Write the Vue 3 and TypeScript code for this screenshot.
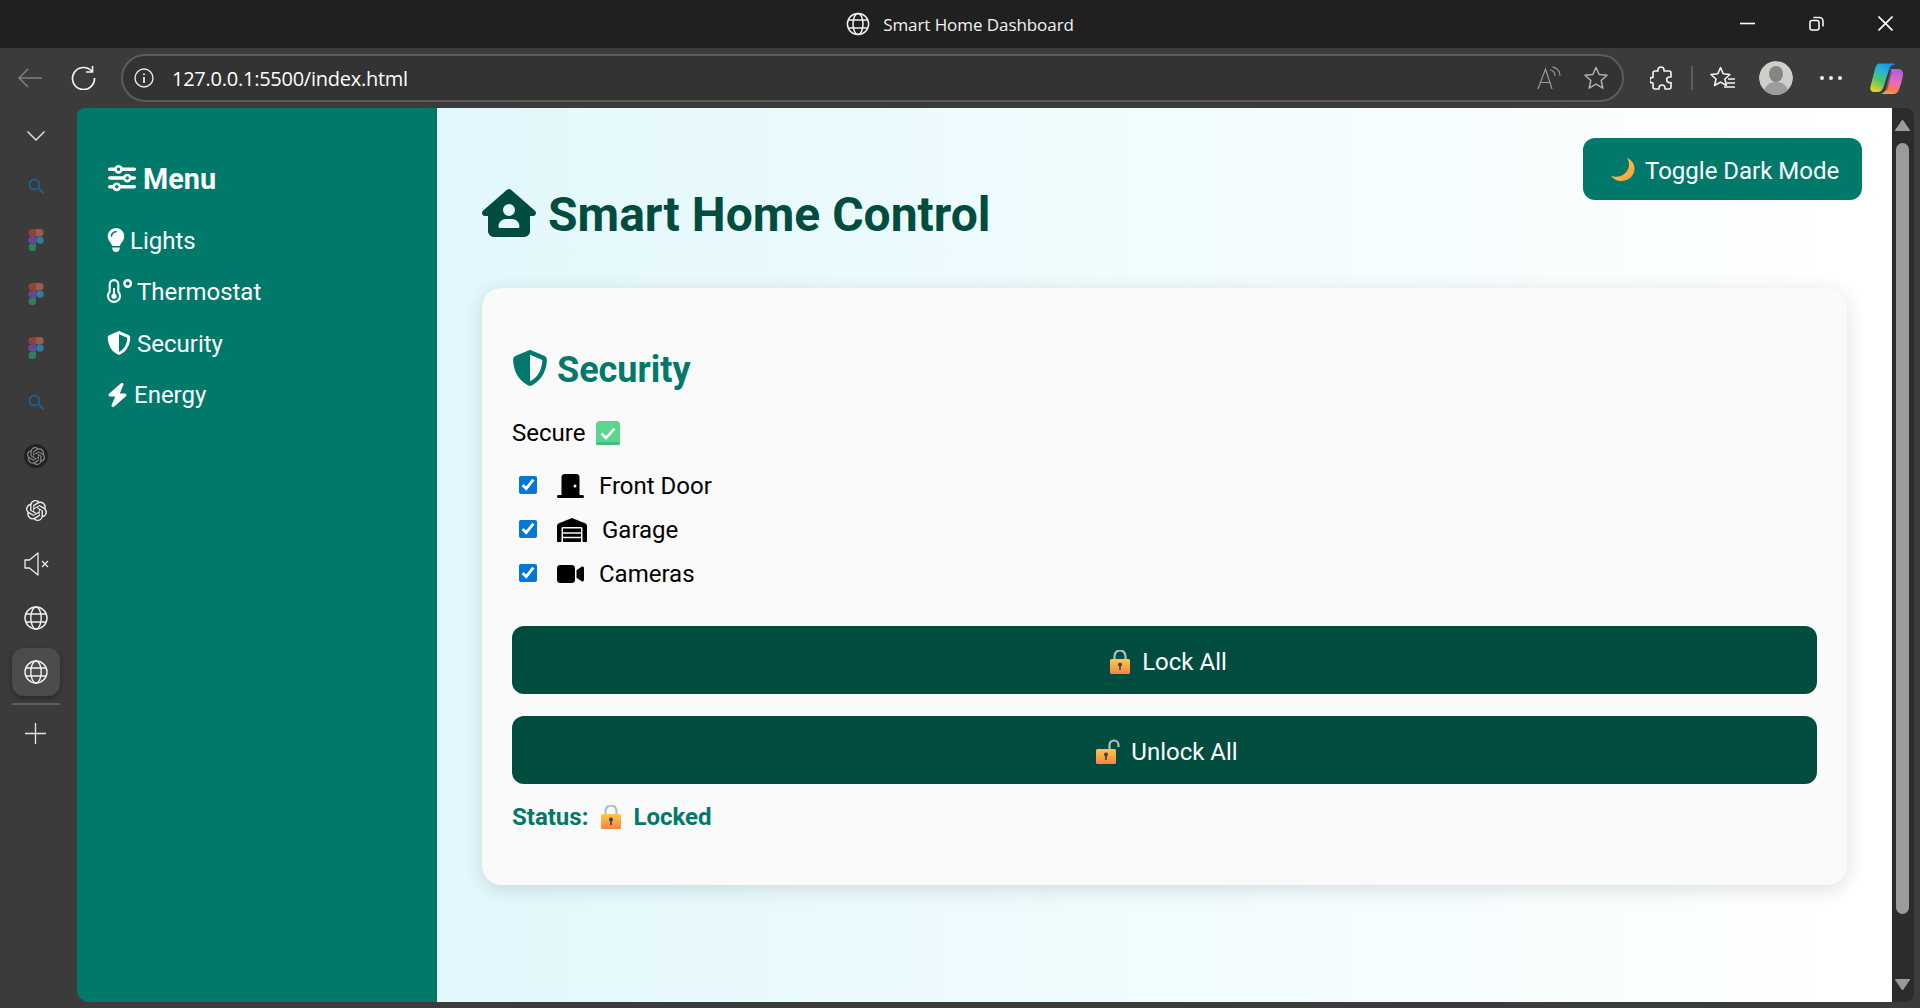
<script setup lang="ts">
const sliders = "M0 416c0 17.7 14.3 32 32 32l54.7 0c12.3 28.3 40.5 48 73.3 48s61-19.7 73.3-48L480 448c17.7 0 32-14.3 32-32s-14.3-32-32-32l-246.7 0c-12.3-28.3-40.5-48-73.3-48s-61 19.7-73.3 48L32 384c-17.7 0-32 14.3-32 32zm128 0a32 32 0 1 1 64 0 32 32 0 1 1 -64 0zM320 256a32 32 0 1 1 64 0 32 32 0 1 1 -64 0zm32-80c-32.8 0-61 19.7-73.3 48L32 224c-17.7 0-32 14.3-32 32s14.3 32 32 32l246.7 0c12.3 28.3 40.5 48 73.3 48s61-19.7 73.3-48l54.7 0c17.7 0 32-14.3 32-32s-14.3-32-32-32l-54.7 0c-12.3-28.3-40.5-48-73.3-48zM192 128a32 32 0 1 1 0-64 32 32 0 1 1 0 64zm73.3-64C253 35.7 224.8 16 192 16s-61 19.7-73.3 48L32 64C14.3 64 0 78.3 0 96s14.3 32 32 32l86.7 0c12.3 28.3 40.5 48 73.3 48s61-19.7 73.3-48L480 128c17.7 0 32-14.3 32-32s-14.3-32-32-32L265.3 64z";
const bulb = "M272 384c9.6-31.9 29.5-59.1 49.2-86.2l0 0c5.2-7.1 10.4-14.2 15.4-21.4c19.8-28.5 31.4-63 31.4-100.3C368 78.8 289.2 0 192 0S16 78.8 16 176c0 37.3 11.6 71.9 31.4 100.3c5 7.2 10.2 14.3 15.4 21.4l0 0c19.8 27.1 39.7 54.4 49.2 86.2H272zM192 512c44.2 0 80-35.8 80-80V416H112v16c0 44.2 35.8 80 80 80zM112 176c0 8.8-7.2 16-16 16s-16-7.2-16-16c0-61.9 50.1-112 112-112c8.8 0 16 7.2 16 16s-7.2 16-16 16c-44.2 0-80 35.8-80 80z";
const shield = "M256 0c4.6 0 9.2 1 13.4 2.9L457.7 82.8c22 9.3 38.4 31 38.3 57.2c-.5 99.2-41.3 280.7-213.6 363.2c-16.7 8-36.1 8-52.8 0C57.3 420.7 16.5 239.2 16 140c-.1-26.2 16.3-47.9 38.3-57.2L242.7 2.9C246.8 1 251.4 0 256 0zm0 66.8V444.8C394 378 431.1 230.1 432 141.4L256 66.8l0 0z";
const bolt = "M349.4 44.6c5.9-13.7 1.5-29.7-10.6-38.5s-28.6-8-39.9 1.8l-256 224c-10 8.8-13.6 22.9-8.9 35.3S50.7 288 64 288H175.5L98.6 467.4c-5.9 13.7-1.5 29.7 10.6 38.5s28.6 8 39.9-1.8l256-224c10-8.8 13.6-22.9 8.9-35.3s-16.6-20.7-30-20.7H272.5L349.4 44.6z";
const houseUser = "M575.8 255.5c0 18-15 32.1-32 32.1h-32l.7 160.2c.2 35.5-28.5 64.3-64 64.3H128.1c-35.3 0-64-28.7-64-64V287.6H32c-18 0-32-14-32-32.1c0-9 3-17 10-24L266.4 8c7-7 15-8 22-8s15 2 21 7L564.8 231.5c8 7 12 15 11 24zM352 224a64 64 0 1 0 -128 0 64 64 0 1 0 128 0zm-96 96c-44.2 0-80 35.8-80 80c0 8.8 7.2 16 16 16H384c8.8 0 16-7.2 16-16c0-44.2-35.8-80-80-80H256z";
const door = "M96 64c0-35.3 28.7-64 64-64H416c35.3 0 64 28.7 64 64V448h64c17.7 0 32 14.3 32 32s-14.3 32-32 32H432 144 32c-17.7 0-32-14.3-32-32s14.3-32 32-32H96V64zM384 288a32 32 0 1 0 0-64 32 32 0 1 0 0 64z";
const warehouse = "M0 488V171.3c0-26.2 15.9-49.7 40.2-59.4L308.1 4.8c7.6-3.1 16.1-3.1 23.8 0L599.8 111.9c24.3 9.7 40.2 33.3 40.2 59.4V488c0 13.3-10.7 24-24 24H568c-13.3 0-24-10.7-24-24V224c0-17.7-14.3-32-32-32H128c-17.7 0-32 14.3-32 32V488c0 13.3-10.7 24-24 24H24c-13.3 0-24-10.7-24-24zm488 24l-336 0c-13.3 0-24-10.7-24-24V432H512l0 56c0 13.3-10.7 24-24 24zM128 400V336H512v64H128zm0-96V224H512l0 80H128z";
const video = "M0 128C0 92.7 28.7 64 64 64H320c35.3 0 64 28.7 64 64V384c0 35.3-28.7 64-64 64H64c-35.3 0-64-28.7-64-64V128zM559.1 99.8c10.4 5.6 16.9 16.4 16.9 28.2V384c0 11.8-6.5 22.6-16.9 28.2s-23 5-32.9-1.6l-96-64L416 337.1V320 192 174.9l14.2-9.5 96-64c9.8-6.5 22.4-7.2 32.9-1.6z";
const knot = "M22.2819 9.8211a5.9847 5.9847 0 0 0-.5157-4.9108 6.0462 6.0462 0 0 0-6.5098-2.9A6.0651 6.0651 0 0 0 4.9807 4.1818a5.9847 5.9847 0 0 0-3.9977 2.9 6.0462 6.0462 0 0 0 .7427 7.0966 5.98 5.98 0 0 0 .511 4.9107 6.051 6.051 0 0 0 6.5146 2.9001A5.9847 5.9847 0 0 0 13.2599 24a6.0557 6.0557 0 0 0 5.7718-4.2058 5.9894 5.9894 0 0 0 3.9977-2.9001 6.0557 6.0557 0 0 0-.7475-7.0729zm-9.022 12.6081a4.4755 4.4755 0 0 1-2.8764-1.0408l.1419-.0804 4.7783-2.7582a.7948.7948 0 0 0 .3927-.6813v-6.7369l2.02 1.1686a.071.071 0 0 1 .038.052v5.5826a4.504 4.504 0 0 1-4.4945 4.4944zm-9.6607-4.1254a4.4708 4.4708 0 0 1-.5346-3.0137l.142.0852 4.783 2.7582a.7712.7712 0 0 0 .7806 0l5.8428-3.3685v2.3324a.0804.0804 0 0 1-.0332.0615L9.74 19.9502a4.4992 4.4992 0 0 1-6.1408-1.6464zM2.3408 7.8956a4.485 4.485 0 0 1 2.3655-1.9728V11.6a.7664.7664 0 0 0 .3879.6765l5.8144 3.3543-2.0201 1.1685a.0757.0757 0 0 1-.071 0l-4.8303-2.7865A4.504 4.504 0 0 1 2.3408 7.872zm16.5963 3.8558L13.1038 8.364 15.1192 7.2a.0757.0757 0 0 1 .071 0l4.8303 2.7913a4.4944 4.4944 0 0 1-.6765 8.1042v-5.6772a.79.79 0 0 0-.407-.667zm2.0107-3.0231l-.142-.0852-4.7735-2.7818a.7759.7759 0 0 0-.7854 0L9.409 9.2297V6.8974a.0662.0662 0 0 1 .0284-.0615l4.8303-2.7866a4.4992 4.4992 0 0 1 6.6802 4.66zM8.3065 12.863l-2.02-1.1638a.0804.0804 0 0 1-.038-.0567V6.0742a4.4992 4.4992 0 0 1 7.3757-3.4537l-.142.0805L8.704 5.459a.7948.7948 0 0 0-.3927.6813zm1.0976-2.3654l2.602-1.4998 2.6069 1.4998v2.9994l-2.5974 1.4997-2.6067-1.4997Z";

const railItems: string[] = ["search", "figma", "figma", "figma", "search", "knotDark", "knot", "mute", "globe", "globeActive"];
</script>

<template>
  <div class="window">
    <header class="titlebar">
      <div></div>
      <div class="title">
        <svg class="title-globe" viewBox="0 0 24 24" fill="none" stroke="#f2f2f2" stroke-width="1.5">
          <circle cx="12" cy="12" r="10.6" /><ellipse cx="12" cy="12" rx="5" ry="10.6" />
          <path d="M2.2 8h19.6M2.2 16h19.6" />
        </svg>
        <span>Smart Home Dashboard</span>
      </div>
      <div class="winctl">
        <svg width="15" height="15" viewBox="0 0 15 15" stroke="#fff" stroke-width="1.6" fill="none"><path d="M0 7.5h15" /></svg>
        <svg width="15" height="15" viewBox="0 0 15 15" stroke="#fff" stroke-width="1.5" fill="none"><rect x="1" y="4.5" width="9" height="9.5" rx="2" /><path d="M4.5 1.5h6a3.5 3.5 0 0 1 3.5 3.5v5.5" /></svg>
        <svg width="15" height="15" viewBox="0 0 15 15" stroke="#fff" stroke-width="1.6" fill="none"><path d="M.5.5l14 14M14.5.5l-14 14" /></svg>
      </div>
    </header>

    <div class="toolbar">
      <svg class="back" width="24" height="20" viewBox="0 0 24 20" fill="none" stroke="#808080" stroke-width="1.5"><path d="M24 10H1M10 1l-9 9 9 9" /></svg>
      <svg class="reload" width="25" height="24" viewBox="0 0 25 24" fill="none" stroke="#f5f5f5" stroke-width="1.7"><path d="M21 5.5A11 11 0 1 0 23.5 12" /><path d="M21.5 0v6h-6.5" /></svg>
      <div class="address">
        <svg class="info" width="20" height="20" viewBox="0 0 20 20" fill="none" stroke="#e8e8e8" stroke-width="1.4"><circle cx="10" cy="10" r="9" /><path d="M10 9v6M10 5.5v1.6" stroke-width="1.8" /></svg>
        <span class="url">127.0.0.1:5500/index.html</span>
        <svg class="aloud" width="24" height="24" viewBox="0 0 24 24" fill="none" stroke="#9a9a9a" stroke-width="1.2"><path d="M1 23L8.5 3 15 23M3.5 16.5h10" /><path d="M13 4c3 .5 5 3 5 6M15.5 0.8c4 .7 7.5 4 7.5 9" /></svg>
        <svg class="star" width="24" height="24" viewBox="0 0 24 24" fill="none" stroke="#b0b0b0" stroke-width="1.5"><path d="M12 1.5l3.2 7 7.8.8-5.8 5.2 1.7 7.7L12 18.2l-6.9 4 1.7-7.7L1 9.3l7.8-.8z" stroke-linejoin="round" /></svg>
      </div>
      <svg class="ext" width="22" height="25" viewBox="0 0 22 25" fill="none" stroke="#f5f5f5" stroke-width="1.6" stroke-linejoin="round"><path d="M8 4a3 3 0 0 1 6 0v1h5a2 2 0 0 1 2 2v4h-1.5a2.8 2.8 0 0 0 0 5.6H21V21a2 2 0 0 1-2 2h-4v-1a3 3 0 0 0-6 0v1H5a2 2 0 0 1-2-2v-4H2.5a2.8 2.8 0 0 1 0-5.6H3V7a2 2 0 0 1 2-2h3z" /></svg>
      <div class="tb-divider"></div>
      <svg class="favs" width="25" height="25" viewBox="0 0 25 25" fill="none" stroke="#f5f5f5" stroke-width="1.6" stroke-linejoin="round"><path d="M10.5 1.5l2.7 6.3 6.7.7-5 4.5 1.5 6.5-5.9-3.4-6 3.4 1.5-6.5-5-4.5 6.8-.7z" /><path d="M18 13h7M17 17h8M14 21h11" /></svg>
      <div class="avatar">
        <svg viewBox="0 0 34 34" width="34" height="34"><circle cx="17" cy="17" r="17" fill="#cfcecb" /><ellipse cx="17" cy="13" rx="7" ry="8" fill="#858585" /><path d="M5 30c2-7 7-9 12-9s10 2 12 9a17 17 0 0 1-24 0z" fill="#9c9c9a" /></svg>
      </div>
      <div class="dots"><i></i><i></i><i></i></div>
      <svg class="copilot" width="34" height="31" viewBox="0 0 34 31">
        <defs>
          <linearGradient id="cpA" x1=".7" y1="0" x2=".2" y2="1"><stop offset="0" stop-color="#1b8fea" /><stop offset=".3" stop-color="#27b5d0" /><stop offset=".62" stop-color="#4cc96a" /><stop offset="1" stop-color="#f4cf1f" /></linearGradient>
          <linearGradient id="cpB" x1=".7" y1="0" x2=".35" y2="1"><stop offset="0" stop-color="#a860e8" /><stop offset=".45" stop-color="#e56ac0" /><stop offset=".8" stop-color="#f8795a" /><stop offset="1" stop-color="#f9a04a" /></linearGradient>
        </defs>
        <path d="M9 .5h13c1.500 0 2.500.3 3.500 1-3-.3-5.500 1.500-6.500 5L13.500 24c-1 3-3 5-6 5H4c-3 0-4.300-2.500-3.500-5.500L5 6C5.800 3 7 .5 9 .5z" fill="url(#cpA)" />
        <path d="M20 6h8c3 0 5.500 2 5 5.500-.7 5-2 10-4 15-1.200 3-3 4.500-5.500 4.500H9c3 0 5.500-1 6.500-4.500L20 9c.5-1.500.5-2.500 0-3z" fill="url(#cpB)" />
        <path d="M19.500 7l-4.800 17.500c-.4 1.500-1.200 2.500-2.200 3.500l4.500-.5 4.500-17c.4-1.500.2-3-.5-4z" fill="#2f3350" opacity=".55" />
      </svg>
    </div>

    <div class="content-row">
      <nav class="rail">
        <svg class="chev" width="18" height="10" viewBox="0 0 18 10" fill="none" stroke="#e8e8e8" stroke-width="1.4"><path d="M.5.5L9 9l8.500-8.500" /></svg>
        <div v-for="(item, i) in railItems" :key="i" class="rail-item" :class="{ active: item === 'globeActive' }">
          <svg v-if="item === 'search'" width="16" height="16" viewBox="0 0 16 16" fill="none" stroke="#1f5d92" stroke-width="2"><circle cx="6.500" cy="6.500" r="5" /><path d="M10 10l5.500 5" /></svg>
          <svg v-else-if="item === 'figma'" width="16" height="22" viewBox="0 0 16 22">
            <path d="M8 0H4a3.700 3.700 0 0 0 0 7.400h4z" fill="#8c4436" /><path d="M8 0h4a3.700 3.700 0 0 1 0 7.400H8z" fill="#9a5a4e" />
            <path d="M8 7.400H4a3.700 3.700 0 0 0 0 7.400h4z" fill="#6a4499" /><circle cx="12" cy="11.100" r="3.700" fill="#2d7ea0" />
            <path d="M4 14.800h4v3.500a3.700 3.700 0 1 1-4-3.500z" fill="#2a8458" />
          </svg>
          <div v-else-if="item === 'knotDark'" class="knot-wrap">
            <svg width="18" height="18" viewBox="0 0 24 24"><path :d="knot" fill="#8a8a8a" /></svg>
          </div>
          <svg v-else-if="item === 'knot'" width="21" height="21" viewBox="0 0 24 24"><path :d="knot" fill="#f0f0f0" /></svg>
          <svg v-else-if="item === 'mute'" width="25" height="24" viewBox="0 0 25 24" fill="none" stroke="#ececec" stroke-width="1.300"><path d="M1 8h4.500L14 1v22l-8.500-7H1z" stroke-linejoin="round" /><path d="M18 9l6 6M24 9l-6 6" /></svg>
          <svg v-else width="24" height="24" viewBox="0 0 24 24" fill="none" stroke="#f2f2f2" stroke-width="1.400">
            <circle cx="12" cy="12" r="11" /><ellipse cx="12" cy="12" rx="5.200" ry="11" /><path d="M1.800 8h20.400M1.800 16h20.400" />
          </svg>
        </div>
        <div class="rail-sep"></div>
        <svg class="plus" width="21" height="21" viewBox="0 0 21 21" stroke="#e8e8e8" stroke-width="1.300"><path d="M10.500 0v21M0 10.500h21" /></svg>
      </nav>

      <aside class="sidebar">
        <h2 class="menu-title">
          <svg class="ic-sliders" viewBox="0 0 512 512"><path :d="sliders" fill="#fff" /></svg>
          <span>Menu</span>
        </h2>
        <ul class="menu">
          <li>
            <svg class="ic-bulb" viewBox="0 0 384 512"><path :d="bulb" fill="#fff" /></svg><span>Lights</span>
          </li>
          <li>
            <svg class="ic-thermo" viewBox="0 0 25 24" fill="none">
              <path d="M7 1.100a4.300 4.300 0 0 0-4.300 4.300v7.300a6 6 0 1 0 8.600 0V5.400A4.300 4.300 0 0 0 7 1.100z" stroke="#fff" stroke-width="2.100" />
              <circle cx="7" cy="17.200" r="2.600" fill="#fff" /><path d="M7 9v8" stroke="#fff" stroke-width="2" />
              <circle cx="20.700" cy="4.500" r="3.300" stroke="#fff" stroke-width="2.400" />
            </svg><span>Thermostat</span>
          </li>
          <li>
            <svg class="ic-shield" viewBox="0 0 512 512"><path :d="shield" fill="#fff" /></svg><span>Security</span>
          </li>
          <li>
            <svg class="ic-bolt" viewBox="0 0 448 512"><path :d="bolt" fill="#fff" /></svg><span>Energy</span>
          </li>
        </ul>
      </aside>

      <main class="main">
        <button class="toggle" type="button">
          <svg class="moon" width="24" height="23" viewBox="0 0 24 23">
            <defs><linearGradient id="moonG" x1="0" y1="0" x2="1" y2="1"><stop offset="0" stop-color="#ffd35c" /><stop offset="1" stop-color="#f79a3c" /></linearGradient></defs>
            <path d="M16 0c5 2 8 6.500 7.500 11.500C23 18 17.500 23 10.500 23 6 23 2 21 0 17.500c1.500 1 3.500 1.400 5.500 1.300C12 18.500 17.500 13.500 18 7.500 18.200 4.500 17.500 2 16 0z" fill="url(#moonG)" />
          </svg>
          <span>Toggle Dark Mode</span>
        </button>

        <h1 class="page-title">
          <svg class="ic-house" viewBox="0 0 576 512"><path :d="houseUser" fill="#004d40" /></svg>
          <span>Smart Home Control</span>
        </h1>

        <section class="card">
          <h2 class="card-title">
            <svg class="ic-shield-lg" viewBox="0 0 512 512"><path :d="shield" fill="#00796b" /></svg>
            <span>Security</span>
          </h2>
          <p class="secure">
            <span>Secure</span>
            <svg class="check-emoji" width="24" height="24" viewBox="0 0 24 24">
              <rect width="24" height="24" rx="3.500" fill="#5bd68f" /><rect y="21" width="24" height="3" rx="1.500" fill="#46bd79" />
              <path d="M5.500 12.500l4.500 4.500 8.500-9.500" fill="none" stroke="#fff" stroke-width="2.600" />
            </svg>
          </p>
          <div class="devices">
            <label class="device">
              <input type="checkbox" checked />
              <svg class="ic-dev ic-door" viewBox="0 0 576 512"><path :d="door" /></svg>
              <span>Front Door</span>
            </label>
            <label class="device">
              <input type="checkbox" checked />
              <svg class="ic-dev ic-garage" viewBox="0 0 640 512"><path :d="warehouse" /></svg>
              <span>Garage</span>
            </label>
            <label class="device">
              <input type="checkbox" checked />
              <svg class="ic-dev ic-door" viewBox="0 0 576 512"><path :d="video" /></svg>
              <span>Cameras</span>
            </label>
          </div>
          <button class="action action-lock" type="button">
            <svg class="lock" width="20" height="24" viewBox="0 0 20 24">
              <defs><linearGradient id="lockG" x1="0" y1="0" x2="0" y2="1"><stop offset="0" stop-color="#ffc94a" /><stop offset="1" stop-color="#f7843f" /></linearGradient></defs>
              <path d="M4.500 11V6a5.500 5.500 0 0 1 11 0v5" fill="none" stroke="#b8bac2" stroke-width="2.200" />
              <rect y="9" width="20" height="15" rx="1.500" fill="url(#lockG)" />
              <circle cx="10" cy="14.500" r="2" fill="#44385c" /><rect x="9.200" y="15" width="1.600" height="5" fill="#44385c" />
            </svg>
            <span>Lock All</span>
          </button>
          <button class="action action-unlock" type="button">
            <svg class="lock" width="24" height="25" viewBox="0 0 24 25">
              <path d="M13.500 11V6a4.500 4.500 0 0 1 9 0v2" fill="none" stroke="#b8bac2" stroke-width="2.200" />
              <rect y="10" width="20" height="15" rx="1.500" fill="url(#lockG)" />
              <circle cx="10" cy="15.500" r="2" fill="#44385c" /><rect x="9.200" y="16" width="1.600" height="5" fill="#44385c" />
            </svg>
            <span>Unlock All</span>
          </button>
          <p class="status">
            <span>Status:</span>
            <svg class="lock" width="20" height="24" viewBox="0 0 20 24">
              <path d="M4.500 11V6a5.500 5.500 0 0 1 11 0v5" fill="none" stroke="#b8bac2" stroke-width="2.200" />
              <rect y="9" width="20" height="15" rx="1.500" fill="url(#lockG)" />
              <circle cx="10" cy="14.500" r="2" fill="#44385c" /><rect x="9.200" y="15" width="1.600" height="5" fill="#44385c" />
            </svg>
            <span>Locked</span>
          </p>
        </section>
      </main>

      <div class="scrollbar">
        <svg class="arrow" width="15" height="11" viewBox="0 0 15 11"><path d="M7.500 0L15 11H0z" fill="#9b9b9b" stroke="#9b9b9b" stroke-linejoin="round" /></svg>
        <div class="thumb"></div>
        <svg class="arrow" width="15" height="11" viewBox="0 0 15 11"><path d="M7.500 11L15 0H0z" fill="#9b9b9b" stroke="#9b9b9b" stroke-linejoin="round" /></svg>
      </div>
    </div>
  </div>
</template>

<style scoped>
.window {
  width: 1920px;
  height: 1008px;
  background: #3b3b3b;
  display: flex;
  flex-direction: column;
  font-family: Roboto, "Liberation Sans", sans-serif;
  overflow: hidden;
}
.titlebar {
  height: 48px;
  flex: none;
  background: #202020;
  display: grid;
  grid-template-columns: 1fr auto 1fr;
  align-items: center;
}
.title {
  display: flex;
  align-items: center;
  gap: 13px;
  color: #f2f2f2;
  font-family: "Open Sans", "Noto Sans", sans-serif;
  font-size: 17px;
  letter-spacing: -0.07px;
}
.title-globe { width: 24px; height: 24px; }
.winctl {
  display: flex;
  justify-content: flex-end;
  gap: 54px;
  padding-right: 27px;
  padding-bottom: 1px;
}
.toolbar {
  height: 60px;
  flex: none;
  display: flex;
  align-items: center;
  padding-left: 18px;
}
.reload { margin-left: 29px; }
.address {
  margin-left: 25px;
  width: 1503px;
  height: 48px;
  box-sizing: border-box;
  border: 2px solid #5c5c5c;
  border-radius: 24px;
  background: #333;
  display: flex;
  align-items: center;
  padding-left: 11px;
}
.url {
  margin-left: 18px;
  color: #fff;
  font-family: "Open Sans", "Noto Sans", sans-serif;
  font-size: 20px;
  letter-spacing: -0.25px;
  flex: 1;
}
.star { margin-left: 23px; margin-right: 14px; }
.ext { margin-left: 26px; }
.tb-divider {
  width: 2px;
  height: 24px;
  background: #5c5c5c;
  margin-left: 19px;
}
.favs { margin-left: 17px; }
.avatar { margin-left: 24px; height: 34px; border-radius: 50%; overflow: hidden; }
.dots { margin-left: 27px; display: flex; gap: 5px; }
.dots i { display: block; width: 4px; height: 4px; background: #f0f0f0; border-radius: 50%; }
.copilot { margin-left: 28px; }

.content-row {
  flex: none;
  height: 894px;
  display: flex;
}
.rail {
  width: 77px;
  flex: none;
  display: flex;
  flex-direction: column;
  align-items: center;
  box-sizing: border-box;
}
.chev { height: 46px; margin: 5px 0 0 -5px; flex: none; }
.rail-item {
  width: 48px;
  height: 54px;
  display: flex;
  align-items: center;
  justify-content: center;
  flex: none;
  margin-left: -5px;
  position: relative;
}
.rail-item.active::before {
  content: "";
  position: absolute;
  inset: 3px 0;
  background: #4c4c4c;
  border-radius: 12px;
  box-shadow: 0 2px 5px rgba(0, 0, 0, 0.35);
}
.rail-item svg { position: relative; }
.knot-wrap {
  width: 24px;
  height: 24px;
  display: flex;
  align-items: center;
  justify-content: center;
  background: #222;
  border-radius: 50%;
}
.rail-sep {
  width: 48px;
  height: 2px;
  flex: none;
  background: #5e5e5e;
  margin: 4px 0 0 -5px;
}
.plus { margin: 18px 0 0 -6px; flex: none; }

.sidebar {
  width: 360px;
  flex: none;
  box-sizing: border-box;
  background: #00796b;
  border-radius: 8px 0 0 12px;
  padding: 54px 0 0 30px;
  color: #fff;
}
.menu-title {
  margin: 0 0 19px;
  display: flex;
  align-items: center;
  gap: 6px;
  font-size: 28.800px;
  font-weight: 700;
  line-height: 34px;
}
.ic-sliders { width: 30px; height: 28px; margin-top: -2px; }
.menu {
  list-style: none;
  margin: 0;
  padding: 0;
}
.menu li {
  height: 51.500px;
  display: flex;
  align-items: center;
  gap: 5px;
  font-size: 24px;
}
.ic-bulb { width: 18px; height: 24px; margin-top: -2px; }
.ic-thermo { width: 25px; height: 24px; margin-top: -2px; }
.ic-shield { width: 24px; height: 24px; margin: -2px 1px 0 0; }
.ic-bolt { width: 21px; height: 24px; margin-right: 1px; }

.main {
  flex: none;
  width: 1455px;
  box-sizing: border-box;
  padding: 79px 45px 0;
  background: linear-gradient(to right, #e2f8fc, #ffffff);
  position: relative;
}
.toggle {
  position: absolute;
  top: 30px;
  right: 30px;
  width: 279px;
  height: 62px;
  border: 0;
  border-radius: 12px;
  background: #00796b;
  color: #fff;
  font: inherit;
  font-size: 24px;
  display: flex;
  align-items: center;
  padding: 3px 0 0 28px;
  gap: 10px;
}
.moon { margin-top: -3px; }
.page-title {
  margin: 0 0 45px;
  display: flex;
  align-items: center;
  gap: 12px;
  color: #004d40;
  font-size: 48px;
  line-height: 56px;
  font-weight: 700;
}
.ic-house { width: 54px; height: 48px; margin-top: -4px; }
.card {
  height: 597px;
  box-sizing: border-box;
  background: #fafafa;
  border-radius: 20px;
  padding: 63px 30px 30px;
  box-shadow: 0 4px 20px rgba(0, 0, 0, 0.13);
}
.card-title {
  margin: 0 0 30px;
  display: flex;
  align-items: center;
  gap: 9px;
  color: #00796b;
  font-size: 36px;
  font-weight: 700;
  line-height: 38px;
}
.ic-shield-lg { width: 36px; height: 36px; margin-top: -4px; }
.secure {
  margin: 0;
  height: 28px;
  display: flex;
  align-items: center;
  gap: 11px;
  font-size: 24px;
  color: #000;
}
.devices { margin-top: 17px; }
.device {
  height: 44px;
  display: flex;
  align-items: center;
  font-size: 24px;
  color: #000;
}
.device input {
  width: 18px;
  height: 18px;
  margin: -2px 20px 0 7px;
  accent-color: #0078d4;
}
.ic-dev { height: 24px; margin-right: 15px; fill: #000; }
.ic-door { width: 27px; }
.ic-garage { width: 30px; }
.action {
  display: flex;
  align-items: center;
  justify-content: center;
  gap: 12px;
  width: 100%;
  height: 68px;
  border: 0;
  border-radius: 12px;
  background: #004d40;
  color: #fff;
  font: inherit;
  font-size: 24px;
}
.action-lock { margin-top: 30px; padding: 3px 0 0 8px; }
.action-unlock { margin-top: 22px; padding: 3px 0 0 5px; gap: 11px; }
.status {
  margin: 20px 0 0;
  height: 26px;
  display: flex;
  align-items: center;
  gap: 12.500px;
  color: #00796b;
  font-size: 24px;
  font-weight: 700;
}
.scrollbar {
  width: 22px;
  flex: none;
  background: #2c2c2c;
  border-radius: 0 8px 8px 0;
  display: flex;
  flex-direction: column;
  align-items: center;
  box-sizing: border-box;
  padding: 12px 2px 12px 0;
}
.thumb {
  width: 13px;
  height: 771px;
  margin-top: 12px;
  margin-bottom: auto;
  background: #9b9b9b;
  border-radius: 7px;
}
</style>
